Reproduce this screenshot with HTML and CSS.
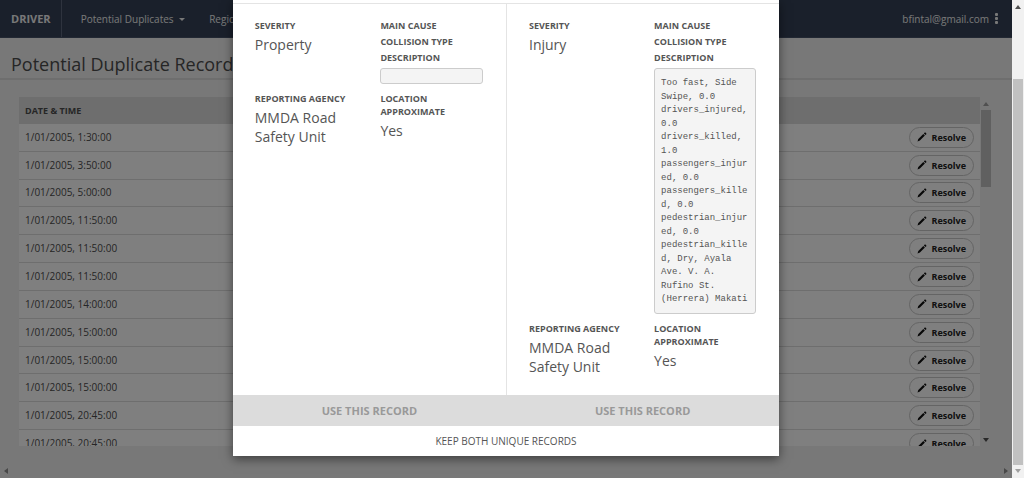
FILE: index.html
```html
<!DOCTYPE html>
<html lang="en">
<head>
<meta charset="utf-8">
<title>DRIVER - Potential Duplicate Records</title>
<link rel="stylesheet" href="styles.css">
</head>
<body>
<svg class="sprite" aria-hidden="true">
  <symbol id="pencil" viewBox="0 0 10 10"><path d="M0.5 9.6l0.8-2.6 5-5 1.6 1.6-5 5zM6.9 1.4l0.8-0.8q0.4-0.4 0.8 0l0.8 0.8q0.4 0.4 0 0.8l-0.8 0.8z"/></symbol>
  <symbol id="up" viewBox="0 0 6 4"><path d="M0 4l3-4 3 4z"/></symbol>
  <symbol id="down" viewBox="0 0 6 4"><path d="M0 0l3 4 3-4z"/></symbol>
</svg>
<div class="app">
  <div class="page">
    <nav class="navbar">
      <a class="brand" href="#">DRIVER</a>
      <a class="nav-link" href="#">Potential Duplicates <span class="caret"></span></a>
      <a class="nav-link" href="#">Region</a>
      <a class="account" href="#">bfintal@gmail.com <span class="dots"><i></i><i></i><i></i></span></a>
    </nav>
    <header class="page-header"><h1>Potential Duplicate Records</h1></header>
    <main class="content">
      <div class="table-area">
        <table class="records">
          <thead><tr><th colspan="2">DATE &amp; TIME</th></tr></thead>
          <tbody>
            <tr><td>1/01/2005, 1:30:00</td><td><button class="resolve"><svg><use href="#pencil"/></svg>Resolve</button></td></tr>
            <tr><td>1/01/2005, 3:50:00</td><td><button class="resolve"><svg><use href="#pencil"/></svg>Resolve</button></td></tr>
            <tr><td>1/01/2005, 5:00:00</td><td><button class="resolve"><svg><use href="#pencil"/></svg>Resolve</button></td></tr>
            <tr><td>1/01/2005, 11:50:00</td><td><button class="resolve"><svg><use href="#pencil"/></svg>Resolve</button></td></tr>
            <tr><td>1/01/2005, 11:50:00</td><td><button class="resolve"><svg><use href="#pencil"/></svg>Resolve</button></td></tr>
            <tr><td>1/01/2005, 11:50:00</td><td><button class="resolve"><svg><use href="#pencil"/></svg>Resolve</button></td></tr>
            <tr><td>1/01/2005, 14:00:00</td><td><button class="resolve"><svg><use href="#pencil"/></svg>Resolve</button></td></tr>
            <tr><td>1/01/2005, 15:00:00</td><td><button class="resolve"><svg><use href="#pencil"/></svg>Resolve</button></td></tr>
            <tr><td>1/01/2005, 15:00:00</td><td><button class="resolve"><svg><use href="#pencil"/></svg>Resolve</button></td></tr>
            <tr><td>1/01/2005, 15:00:00</td><td><button class="resolve"><svg><use href="#pencil"/></svg>Resolve</button></td></tr>
            <tr><td>1/01/2005, 20:45:00</td><td><button class="resolve"><svg><use href="#pencil"/></svg>Resolve</button></td></tr>
            <tr><td>1/01/2005, 20:45:00</td><td><button class="resolve"><svg><use href="#pencil"/></svg>Resolve</button></td></tr>
          </tbody>
        </table>
      </div>
      <div class="list-scroll">
        <svg class="arrow muted"><use href="#up"/></svg>
        <div class="list-thumb"></div>
        <svg class="arrow"><use href="#down"/></svg>
      </div>
    </main>
    <div class="h-scroll"><svg class="side" viewBox="0 0 4 6"><path d="M4 0L0 3l4 3z"/></svg><svg class="side" viewBox="0 0 4 6"><path d="M0 0l4 3-4 3z"/></svg></div>
  </div>
  <div class="backdrop">
    <section class="modal" role="dialog" aria-label="Resolve duplicate">
      <div class="modal-top"></div>
      <div class="compare">
        <div class="record">
          <dl class="field"><dt>SEVERITY</dt><dd>Property</dd></dl>
          <dl class="field"><dt>MAIN CAUSE</dt><dt>COLLISION TYPE</dt><dt>DESCRIPTION</dt><dd class="description"></dd></dl>
          <dl class="field"><dt>REPORTING AGENCY</dt><dd>MMDA Road Safety Unit</dd></dl>
          <dl class="field"><dt>LOCATION APPROXIMATE</dt><dd>Yes</dd></dl>
        </div>
        <div class="record">
          <dl class="field"><dt>SEVERITY</dt><dd>Injury</dd></dl>
          <dl class="field"><dt>MAIN CAUSE</dt><dt>COLLISION TYPE</dt><dt>DESCRIPTION</dt><dd class="description">Too fast, Side Swipe, 0.0 drivers_injured, 0.0 drivers_killed, 1.0 passengers_injured, 0.0 passengers_killed, 0.0 pedestrian_injured, 0.0 pedestrian_killed, Dry, Ayala Ave. V. A. Rufino St. (Herrera) Makati</dd></dl>
          <dl class="field"><dt>REPORTING AGENCY</dt><dd>MMDA Road Safety Unit</dd></dl>
          <dl class="field"><dt>LOCATION APPROXIMATE</dt><dd>Yes</dd></dl>
        </div>
      </div>
      <div class="choices"><button class="use">USE THIS RECORD</button><button class="use">USE THIS RECORD</button></div>
      <button class="keep">KEEP BOTH UNIQUE RECORDS</button>
    </section>
  </div>
</div>
<div class="v-scroll">
  <svg class="arrow"><use href="#up"/></svg>
  <div class="v-thumb"></div>
  <svg class="arrow muted"><use href="#down"/></svg>
</div>
</body>
</html>
```
FILE: styles.css
```css
* { box-sizing: border-box; }
body {
  margin: 0;
  display: flex;
  height: 100vh;
  overflow: hidden;
  font-family: "Open Sans", sans-serif;
  font-size: 10px;
  color: #4c4c4c;
}
a { color: inherit; text-decoration: none; }
button { font: inherit; color: inherit; border: 0; background: none; padding: 0; }
.sprite { position: absolute; width: 0; height: 0; }
.app { position: relative; flex: 1; min-width: 0; overflow: hidden; }
.page { display: flex; flex-direction: column; height: 100%; background: #f0f0f0; }

.navbar { display: flex; align-items: center; flex: none; height: 38px; background: #344056; color: #f0f0f0; border-bottom: 1px solid #455066; }
.brand { display: flex; align-items: center; align-self: stretch; padding: 0 10px 0 11px; border-right: 1px solid #5c677c; font-size: 11px; font-weight: 700; }
.nav-link { margin-left: 19px; }
.nav-link + .nav-link { margin-left: 24px; }
.caret { display: inline-block; margin-left: 3px; vertical-align: 2px; border: 3px solid transparent; border-top-color: currentColor; border-bottom: 0; }
.account { display: flex; align-items: center; gap: 6px; margin-left: auto; padding-right: 14px; }
.dots { display: grid; gap: 1px; }
.dots i { width: 3px; height: 3px; border-radius: 1px; background: currentColor; }

.page-header { flex: none; height: 42px; padding: 0 11px; border-bottom: 2px solid #dcdcdc; }
h1 { margin: 0; padding-top: 13px; font-size: 18px; line-height: 26px; font-weight: 400; }

.content { display: flex; flex: 1; min-height: 0; padding: 17px 20px 0 19px; }
.table-area { flex: 1; overflow: hidden; background: #fff; }
.records { width: 100%; height: 361px; border-collapse: collapse; }
.records th { height: 27px; padding: 0 6px; background: #dcdcdc; text-align: left; font-size: 9px; }
.records td { padding: 0 6px; border-bottom: 1px solid #dcdcdc; line-height: 15px; }
.records td:last-child { text-align: right; }
.resolve { display: inline-flex; align-items: center; gap: 5px; height: 21px; padding: 0 7px; border: 1px solid #c8c8c8; border-radius: 11px; font-size: 9px; font-weight: 700; color: #222; }
.resolve svg { width: 10px; height: 10px; fill: #111; }
.list-scroll { display: flex; flex-direction: column; align-items: center; width: 12px; padding: 5px 0 4px; }
.list-thumb { width: 10px; height: 77px; margin: 4px 0 auto; background: #c1c1c1; }
.arrow { width: 6px; height: 4px; fill: #505050; }
.arrow.muted { fill: #a0a0a0; }
.h-scroll { display: flex; justify-content: space-between; align-items: center; flex: none; height: 14px; margin-top: 18px; padding: 0 4px; }
.side { width: 4px; height: 6px; fill: #909090; }

.backdrop { position: absolute; inset: 0; display: flex; justify-content: center; align-items: flex-start; background: rgba(0, 0, 0, .5); }
.modal { width: 54%; background: #fff; color: #555; box-shadow: 0 3px 10px rgba(0, 0, 0, .5); }
.modal-top { height: 4px; border-bottom: 1px solid #e4e4e4; }
.compare { display: grid; grid-template-columns: 1fr 1fr; }
.record { display: grid; grid-template-columns: 1fr 1fr; align-content: start; row-gap: 8px; padding: 15px 0 19px; }
.record + .record { border-left: 1px solid #e4e4e4; }
.field { margin: 0; padding: 0 22px; }
.field:nth-child(even) { padding: 0 23px 0 11px; }
.field dt { margin-bottom: 3px; font-size: 9px; line-height: 13px; font-weight: 700; }
.field dd { margin: 0; font-size: 14px; line-height: 19px; }
.field .description { min-height: 16px; margin-top: 4px; padding: 8px 6px 6px; border: 1px solid #ccc; border-radius: 3px; background: #f4f4f4; font: 9px/1.5 "Liberation Mono", monospace; overflow-wrap: anywhere; }
.choices { display: grid; grid-template-columns: 1fr 1fr; }
.use { height: 31px; background: #dcdcdc; color: #999; font-size: 11px; font-weight: 700; }
.keep { display: block; width: 100%; height: 30px; }

.v-scroll { display: flex; flex-direction: column; align-items: center; flex: none; width: 12px; padding: 5px 0; background: #f1f1f1; }
.v-thumb { width: 10px; flex: 1; margin: 70px 0 4px; background: #c1c1c1; }
```
